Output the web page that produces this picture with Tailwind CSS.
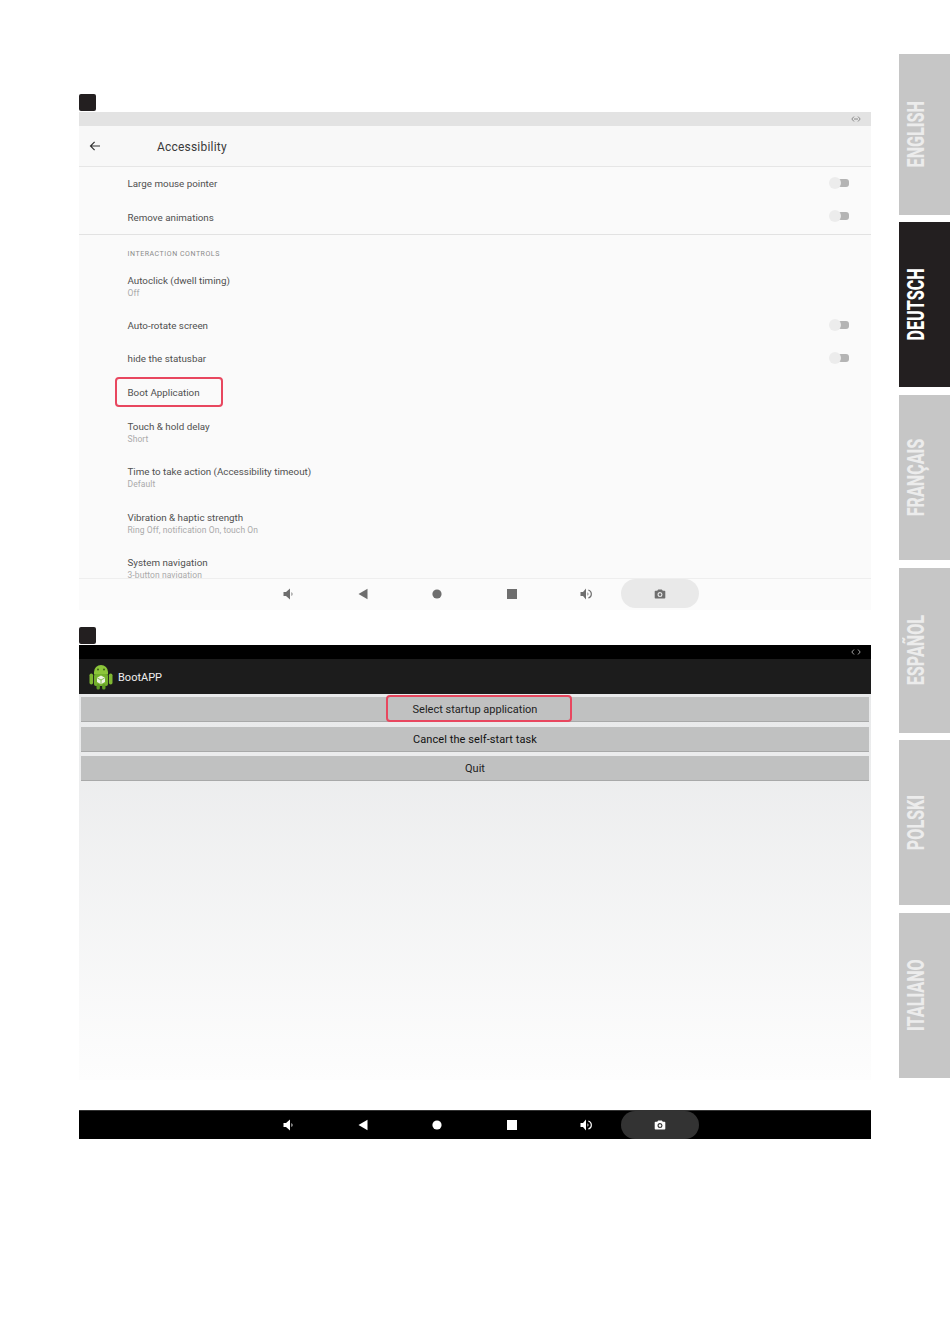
<!DOCTYPE html>
<html>
<head>
  <title>BootAPP manual page</title>
  <script src="https://cdn.jsdelivr.net/npm/@tailwindcss/browser@4"></script>
</head>
<body class="bg-white font-['Roboto',sans-serif]">
  <div class="flex w-[950px] h-[1333px] overflow-hidden">
    <!-- manual page -->
    <main class="w-[899px] pl-[79px] pr-[28px] pt-[94px]">
      <div class="w-[17px] h-[17px] rounded-[2px] bg-[#231f20] mb-px"></div>

      <section class="h-[498px] bg-[#fafafa] flex flex-col overflow-hidden">
        <div class="h-[14px] shrink-0 bg-[#e3e3e3] flex items-center justify-end pr-[10px]">
          <svg class="w-[10px] h-[6px]" viewBox="0 0 10 6" fill="none" stroke="#8a8a8a" stroke-width="1"><path d="M3 .5 .8 3 3 5.5M7 .5 9.2 3 7 5.5M3 3h4"/></svg>
        </div>
        <div class="h-[41px] shrink-0 bg-[#f8f8f8] border-b border-[#e6e6e6] flex items-center">
          <svg class="w-[12px] h-[12px] ml-[10px]" viewBox="0 0 12 12" fill="none" stroke="#333" stroke-width="1.2"><path d="M11 6H1.5M5.600 1.800 1.500 6l4.100 4.200"/></svg>
          <span class="ml-[56px] mt-px text-[12px] tracking-[0.2px] text-[#3a3a3a]">Accessibility</span>
        </div>
        <div class="flex-1 min-h-0 overflow-hidden text-[9.8px] text-[#505050] pl-[48.5px]">
          <div class="h-[33.5px] flex items-center justify-between pr-[22px]">
            <span class="mt-[2px]">Large mouse pointer</span>
            <span class="relative block w-[20px] h-[12px] mb-[2px]"><span class="absolute right-0 top-[2px] w-[11px] h-[8px] rounded-[3px] bg-[#b4b4b4]"></span><span class="absolute left-0 top-0 w-[12px] h-[12px] rounded-full bg-[#ececec]"></span></span>
          </div>
          <div class="h-[33.5px] flex items-center justify-between pr-[22px]">
            <span class="mt-[2px]">Remove animations</span>
            <span class="relative block w-[20px] h-[12px] mb-[2px]"><span class="absolute right-0 top-[2px] w-[11px] h-[8px] rounded-[3px] bg-[#b4b4b4]"></span><span class="absolute left-0 top-0 w-[12px] h-[12px] rounded-full bg-[#ececec]"></span></span>
          </div>
          <div class="h-px -ml-[48.5px] bg-[#e2e2e2]"></div>
          <div class="h-[29px] pt-[15px] text-[7px] leading-[9px] tracking-[0.55px] text-[#8a8a8a]">INTERACTION CONTROLS</div>
          <div class="h-[45px] flex flex-col justify-center">
            <span class="leading-[13px]">Autoclick (dwell timing)</span>
            <span class="text-[8.5px] leading-[13px] tracking-[0.08px] text-[#aaaaaa]">Off</span>
          </div>
          <div class="h-[33px] flex items-center justify-between pr-[22px]">
            <span class="mt-[2px]">Auto-rotate screen</span>
            <span class="relative block w-[20px] h-[12px] mb-[2px]"><span class="absolute right-0 top-[2px] w-[11px] h-[8px] rounded-[3px] bg-[#b4b4b4]"></span><span class="absolute left-0 top-0 w-[12px] h-[12px] rounded-full bg-[#ececec]"></span></span>
          </div>
          <div class="h-[33px] flex items-center justify-between pr-[22px]">
            <span class="mt-[1px]">hide the statusbar</span>
            <span class="relative block w-[20px] h-[12px] mb-[2px]"><span class="absolute right-0 top-[2px] w-[11px] h-[8px] rounded-[3px] bg-[#b4b4b4]"></span><span class="absolute left-0 top-0 w-[12px] h-[12px] rounded-full bg-[#ececec]"></span></span>
          </div>
          <div class="relative h-[34px] flex items-center">
            <span class="mt-[2px]">Boot Application</span>
            <div class="absolute left-[-12.5px] top-[2px] w-[108px] h-[30px] rounded-[4px] border-[2.5px] border-[#e8475f]"></div>
          </div>
          <div class="h-[46px] pt-[1px] flex flex-col justify-center">
            <span class="leading-[13px]">Touch &amp; hold delay</span>
            <span class="text-[8.5px] leading-[13px] tracking-[0.08px] text-[#aaaaaa]">Short</span>
          </div>
          <div class="h-[45px] flex flex-col justify-center">
            <span class="leading-[13px]">Time to take action (Accessibility timeout)</span>
            <span class="text-[8.5px] leading-[13px] tracking-[0.08px] text-[#aaaaaa]">Default</span>
          </div>
          <div class="h-[46px] pt-[1px] flex flex-col justify-center">
            <span class="leading-[13px]">Vibration &amp; haptic strength</span>
            <span class="text-[8.5px] leading-[13px] tracking-[0.08px] text-[#aaaaaa]">Ring Off, notification On, touch On</span>
          </div>
          <div class="h-[45px] flex flex-col justify-center">
            <span class="leading-[13px]">System navigation</span>
            <span class="text-[8.5px] leading-[13px] tracking-[0.08px] text-[#aaaaaa]">3-button navigation</span>
          </div>
        </div>
        <nav data-nav class="h-[32px] shrink-0 bg-[#fbfbfb] border-t border-[#eeeeee] flex pl-[172.5px] pb-[2px] text-[#6e6e6e]"></nav>
      </section>

      <div class="w-[17px] h-[17px] rounded-[2px] bg-[#231f20] mt-[17px] mb-px"></div>

      <section class="h-[494px] flex flex-col overflow-hidden">
        <div class="h-[14px] shrink-0 bg-black flex items-center justify-end pr-[10px]">
          <svg class="w-[10px] h-[6px]" viewBox="0 0 10 6" fill="none" stroke="#a0a0a0" stroke-width="1"><path d="M3 .5 .8 3 3 5.5M7 .5 9.2 3 7 5.5"/></svg>
        </div>
        <div class="h-[35px] shrink-0 bg-[#1c1c1c] flex items-center pl-[10px]">
          <svg class="w-[24px] h-[26px]" viewBox="0 0 24 26">
            <path d="M5 10.500V8a7 7 0 0 1 14 0v2.500z" fill="#8cc63a"/>
            <circle cx="9" cy="5.500" r="1" fill="#3d5f16"/><circle cx="15" cy="5.500" r="1" fill="#3d5f16"/>
            <rect x="5" y="10" width="14" height="12" rx="2" fill="#74b12c"/>
            <rect x=".5" y="9.500" width="3.600" height="11" rx="1.800" fill="#7fb832"/>
            <rect x="19.900" y="9.500" width="3.600" height="11" rx="1.800" fill="#7fb832"/>
            <rect x="7.500" y="20" width="3.400" height="5.500" rx="1.500" fill="#5f9c25"/>
            <rect x="13.100" y="20" width="3.400" height="5.500" rx="1.500" fill="#5f9c25"/>
            <path d="M12 11.500 16 13.700v4.400L12 20.300 8 18.100v-4.400z" fill="#eef3e4"/>
            <path d="M8.300 14 12 16l3.700-2M12 16v4" stroke="#6fae2a" stroke-width=".8" fill="none"/>
          </svg>
          <span class="ml-[5px] mt-[3px] text-[11px] text-[#eeeeee]">BootAPP</span>
        </div>
        <div class="h-[386px] shrink-0 bg-gradient-to-b from-[#e8e9ea] to-[#fdfdfd] px-[2px] pt-[3px] flex flex-col text-[11px] text-[#222222]">
          <div class="relative h-[25px] pt-[2px] bg-[#c0c1c1] border-b border-[#a8a9a9] flex items-center justify-center">
            <span>Select startup application</span>
            <div class="absolute left-[305px] top-[-2px] w-[186px] h-[27px] rounded-[4px] border-[2.5px] border-[#e8475f]"></div>
          </div>
          <div class="h-[25px] mt-[5px] pt-[2px] bg-[#c0c1c1] border-b border-[#a8a9a9] flex items-center justify-center tracking-[0.08px] text-[#111111]">Cancel the self-start task</div>
          <div class="h-[25px] mt-[4px] pt-[3px] bg-[#c0c1c1] border-b border-[#a8a9a9] flex items-center justify-center">Quit</div>
        </div>
        <div class="h-[30px] shrink-0 bg-white"></div>
        <nav data-nav data-dark class="h-[29px] shrink-0 bg-black border-t border-[#333333] flex pl-[172.5px] text-white"></nav>
      </section>
    </main>

    <!-- language tabs -->
    <aside class="w-[51px] pt-[54px] font-['Roboto',sans-serif] font-extrabold text-[23px] leading-none text-[#ececec]">
      <div class="h-[161px] mb-[7px] bg-[#c6c6c6] flex items-center pl-[6px]"><span class="[writing-mode:vertical-rl] rotate-180 scale-y-[0.7]">ENGLISH</span></div>
      <div class="h-[165px] mb-[8px] bg-[#231f20] text-white flex items-center pl-[6px]"><span class="[writing-mode:vertical-rl] rotate-180 scale-y-[0.7]">DEUTSCH</span></div>
      <div class="h-[165px] mb-[8px] bg-[#c6c6c6] flex items-center pl-[6px]"><span class="[writing-mode:vertical-rl] rotate-180 scale-y-[0.7]">FRANÇAIS</span></div>
      <div class="h-[165px] mb-[7px] bg-[#c6c6c6] flex items-center pl-[6px]"><span class="[writing-mode:vertical-rl] rotate-180 scale-y-[0.7]">ESPAÑOL</span></div>
      <div class="h-[165px] mb-[8px] bg-[#c6c6c6] flex items-center pl-[6px]"><span class="[writing-mode:vertical-rl] rotate-180 scale-y-[0.7]">POLSKI</span></div>
      <div class="h-[165px] bg-[#c6c6c6] flex items-center pl-[6px]"><span class="[writing-mode:vertical-rl] rotate-180 scale-y-[0.7]">ITALIANO</span></div>
    </aside>
  </div>

  <script>
    // both nav bars share the same six buttons
    const navIcons = [
      '<path d="M.5 4H3L7 .5v11L3 8H.5z"/><path d="M8.500 4a2.500 2.500 0 0 1 0 4z"/>',
      '<path d="M10.500.8v10.400L1.500 6z"/>',
      '<circle cx="6" cy="6" r="4.600"/>',
      '<rect x="1" y="1" width="10" height="10"/>',
      '<path d="M.5 4H3L6 .5v11L3 8H.5z"/><path d="M7.500 4.200a2.200 2.200 0 0 1 0 3.600zM8.500 1.400a4.800 4.800 0 0 1 0 9.200l-.3-1a3.800 3.800 0 0 0 0-7.200z"/>'
    ];
    const camera = '<path fill-rule="evenodd" d="M4.200 1.500h3.600l1 1.300h1.700a.8.8 0 0 1 .8.8v6.100a.8.8 0 0 1-.8.8h-9a.8.8 0 0 1-.8-.8V3.600a.8.8 0 0 1 .8-.8h1.700zM6 4.100a2.500 2.500 0 1 0 0 5 2.500 2.500 0 0 0 0-5z"/><circle cx="6" cy="6.600" r="1.300"/>';

    document.querySelectorAll("[data-nav]").forEach((nav) => {
      const pill = "dark" in nav.dataset ? "bg-[#333333]" : "bg-[#e9e9e9]";
      navIcons.forEach((icon) => {
        nav.innerHTML += `
          <div class="w-[74.3px] flex items-center justify-center">
            <svg class="w-[12px] h-[12px]" viewBox="0 0 12 12" fill="currentColor">${icon}</svg>
          </div>`;
      });
      nav.innerHTML += `
        <div class="w-[78px] -ml-[2px] rounded-full flex items-center justify-center ${pill}">
          <svg class="w-[12px] h-[12px]" viewBox="0 0 12 12" fill="currentColor">${camera}</svg>
        </div>`;
    });
  </script>
</body>
</html>
